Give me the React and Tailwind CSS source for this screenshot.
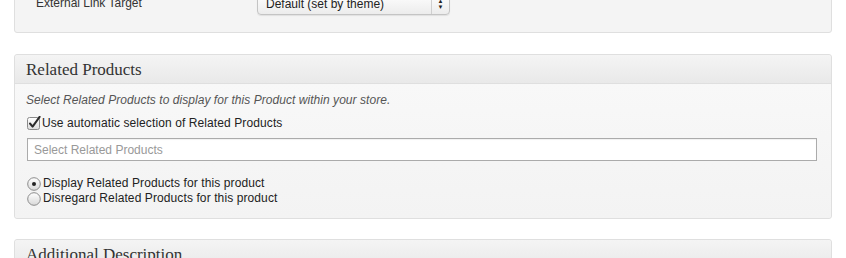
function Checkbox() {
  return (
    <svg width="14" height="14" viewBox="0 0 14 14" className="shrink-0">
      <defs>
        <linearGradient id="cbg" x1="0" y1="0" x2="0" y2="1">
          <stop offset="0" stopColor="#ffffff" />
          <stop offset="1" stopColor="#dcdcdc" />
        </linearGradient>
      </defs>
      <rect x="0.5" y="1.5" width="12" height="12" rx="2" fill="url(#cbg)" stroke="#8a8a8a" />
      <path d="M3 7.5 L5.6 10.6 L12.6 0.8" fill="none" stroke="#2a2a2a" strokeWidth="2" strokeLinecap="round" strokeLinejoin="round" />
    </svg>
  );
}

function Radio({ checked }) {
  return (
    <svg width="14" height="14" viewBox="0 0 14 14" className="shrink-0">
      <defs>
        <linearGradient id="rbg" x1="0" y1="0" x2="0" y2="1">
          <stop offset="0" stopColor="#ffffff" />
          <stop offset="1" stopColor="#d8d8d8" />
        </linearGradient>
      </defs>
      <circle cx="7" cy="7" r="6.3" fill="url(#rbg)" stroke="#8c8c8c" />
      {checked && <circle cx="7" cy="7" r="2" fill="#222" />}
    </svg>
  );
}

function PanelHeader({ children }) {
  return (
    <div className="h-[29px] flex items-center pl-[11px] border-b border-[#dfdfdf] rounded-t-[3px] bg-gradient-to-b from-[#f4f4f4] to-[#e9e9e9]">
      <span className="text-[17px] text-[#333] leading-none" style={{ fontFamily: '"Liberation Serif", "DejaVu Serif", serif' }}>
        {children}
      </span>
    </div>
  );
}

export default function App() {
  return (
    <div className="w-[846px] h-[258px] overflow-hidden bg-white text-[#333]" style={{ fontFamily: '"Liberation Sans", Arial, sans-serif' }}>
      {/* product options panel, scrolled past */}
      <div className="mx-[14px] w-[818px] -mt-[19px] border border-[#dfdfdf] rounded-[3px] bg-[#f4f4f4] pt-[10px] pb-[17px]">
        <div className="flex items-center">
          <span className="pl-[21px] w-[242px] text-[12px] -mt-[2px]">External Link Target</span>
          <div className="flex items-stretch w-[193px] h-[23px] border border-[#c4c4c4] rounded-[4px] bg-gradient-to-b from-white to-[#ececec] shadow-[0_1px_1px_rgba(0,0,0,0.08)]">
            <span className="flex-1 flex items-center pl-[8px] text-[12px] text-[#222]">Default (set by theme)</span>
            <span className="w-[18px] border-l border-[#cfcfcf] flex flex-col items-center justify-center text-[6px] leading-[6px] text-[#222]">
              <span>▲</span>
              <span>▼</span>
            </span>
          </div>
        </div>
      </div>

      {/* related products */}
      <div className="mx-[14px] w-[818px] mt-[21px] border border-[#dfdfdf] rounded-[3px] bg-[#f5f5f5]">
        <PanelHeader>Related Products</PanelHeader>
        <div className="pl-[11px] pr-[14px] pt-[8px] pb-[12px] bg-gradient-to-b from-[#f8f8f8] to-[#f3f3f3] rounded-b-[3px]">
          <p className="text-[12px] leading-[16px] italic text-[#555] tracking-[0.05px]">
            Select Related Products to display for this Product within your store.
          </p>
          <label className="mt-[7px] flex items-center gap-[1px] text-[12px] leading-[16px] text-[#222] tracking-[0.1px]">
            <span className="pl-[1px]"><Checkbox /></span>
            <span>Use automatic selection of Related Products</span>
          </label>
          <div className="mt-[7px] ml-[1px] w-[790px] h-[23px] border border-[#ababab] bg-white flex items-center pl-[6px] text-[12px] text-[#999] shadow-[inset_0_1px_1px_rgba(0,0,0,0.06)]">
            Select Related Products
          </div>
          <div className="mt-[15px] flex flex-col text-[12px] leading-[15px] text-[#222] tracking-[0.1px]">
            <label className="flex items-center gap-[2px]">
              <span className="pl-[1px]"><Radio checked /></span>
              <span>Display Related Products for this product</span>
            </label>
            <label className="flex items-center gap-[2px]">
              <span className="pl-[1px]"><Radio /></span>
              <span>Disregard Related Products for this product</span>
            </label>
          </div>
        </div>
      </div>

      {/* additional description */}
      <div className="mx-[14px] w-[818px] mt-[20px] border border-[#dfdfdf] rounded-[3px] bg-[#f5f5f5]">
        <PanelHeader>Additional Description</PanelHeader>
      </div>
    </div>
  );
}
